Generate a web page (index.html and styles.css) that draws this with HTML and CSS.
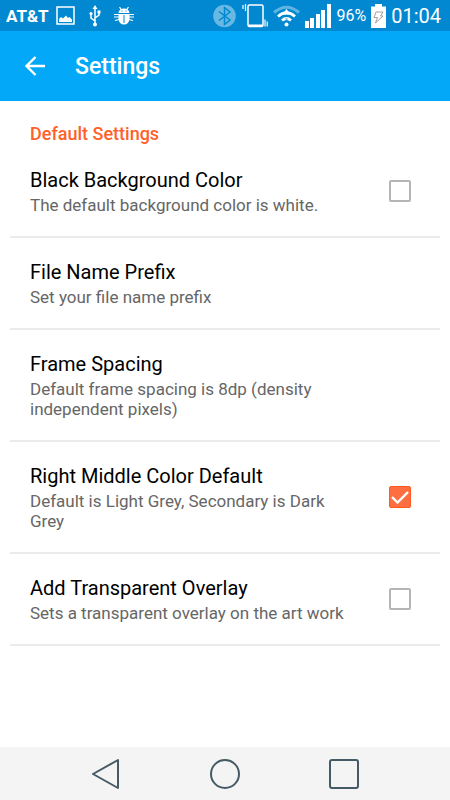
FILE: index.html
```html
<!DOCTYPE html>
<html lang="en">
<head>
<meta charset="utf-8">
<meta name="viewport" content="width=device-width, initial-scale=1">
<title>Settings</title>
<link rel="stylesheet" href="styles.css">
</head>
<body>
<div class="status-bar">
  <div class="status-group notifications">
    <span class="carrier">AT&amp;T</span>
    <svg width="20" height="20" viewBox="0 0 20 20" aria-hidden="true"><rect x="1" y="1" width="17" height="17" fill="none" stroke="#fff" stroke-width="1.500"/><path d="M3 16v-3l2-2 2 1.500 3-3 2 2.500 1.500-1 2.500 2.500V16z" fill="#fff"/></svg>
    <svg width="12" height="22" viewBox="0 0 12 22" aria-hidden="true"><path d="M6 2v17M6 16l-4-3V9M6 13l4-3V7" fill="none" stroke="#fff" stroke-width="1.500"/><path d="M6 0l2.500 4h-5z" fill="#fff"/><circle cx="6" cy="19.500" r="2" fill="#fff"/><circle cx="2" cy="8.500" r="1.600" fill="#fff"/><path d="M8.500 5.500h3v3h-3z" fill="#fff"/></svg>
    <svg width="20" height="18" viewBox="0 0 20 18" aria-hidden="true"><path d="M4.500 6a5.500 4.500 0 0 1 11 0zM4.500 7h11v5a5.500 5.500 0 0 1-11 0z" fill="#fff"/><path d="M5.500 0l2 3M14.500 0l-2 3M0 7.500h5M15 7.500h5M0 10h5M15 10h5M1 13.500l4-1M19 13.500l-4-1" stroke="#fff" stroke-width="1.200"/><path d="M10 8v8M7.500 4h1M11.500 4h1" stroke="#0288d1"/></svg>
  </div>
  <div class="status-group">
    <svg width="24" height="24" viewBox="0 0 24 24" aria-hidden="true"><circle cx="11.500" cy="12" r="11.300" fill="#67b8e3"/><path d="M6 7.500l11 8.500-5.500 4.500v-17L17 8 6 16.500" fill="none" stroke="#0288d1" stroke-width="1.500"/></svg>
    <svg width="26" height="24" viewBox="0 0 26 24" aria-hidden="true"><rect x="6" y="1" width="15" height="21.500" rx="1.500" fill="none" stroke="#fff" stroke-width="1.500"/><path d="M6 20.500h15V23H6z" fill="#fff"/><path d="M3.500 0v7M1 1v4M23 15.500v7M25.200 17.500v5" stroke="#fff" stroke-width="1.200"/></svg>
    <svg width="27" height="22" viewBox="0 0 27 22" aria-hidden="true"><path d="M1 7.500Q13.500-3 26 7.500" fill="none" stroke="#5fb4e2" stroke-width="3"/><path d="M5 11.500Q13.500 4 22 11.500M9 15.500Q13.500 11.500 18 15.500" fill="none" stroke="#fff" stroke-width="2.800"/><path d="M13.500 4l4 5.500h-8z" fill="#fff"/><path d="M11 11.500h5M12.500 14h2" stroke="#0288d1" stroke-width="1.200"/><circle cx="13.500" cy="19.500" r="2" fill="#fff"/></svg>
    <svg width="26" height="24" viewBox="0 0 26 24" aria-hidden="true"><path d="M0 17h4v7H0zM5 14h4v10H5zM11 10h4v14h-4zM16 6h4v18h-4zM22 0h4v24h-4z" fill="#fff"/></svg>
    <span class="percent">96%</span>
    <svg width="15" height="24" viewBox="0 0 15 24" aria-hidden="true"><path d="M4 0h7v2.500h4V24H0V2.500h4z" fill="#fff"/><path d="M5 8h7l-2.500 4H12l-7.500 7 2-5.500H3z" fill="#fff" stroke="#999" stroke-width=".9"/></svg>
    <time class="clock">01:04</time>
  </div>
</div>
<header class="app-bar">
  <button class="back" type="button" aria-label="Back">
    <svg width="22" height="22" viewBox="0 0 22 22" aria-hidden="true"><path d="M21 11H3M11.500 2L2.500 11l9 9" fill="none" stroke="#fff" stroke-width="2.400"/></svg>
  </button>
  <h1 class="title">Settings</h1>
</header>
<main class="content">
  <h2 class="section">Default Settings</h2>
  <ul class="list">
    <li class="row">
      <label class="text" for="black"><span class="name">Black Background Color</span><span class="summary">The default background color is white.</span></label>
      <input class="check" type="checkbox" id="black">
    </li>
    <li class="row">
      <div class="text"><span class="name">File Name Prefix</span><span class="summary">Set your file name prefix</span></div>
    </li>
    <li class="row">
      <div class="text"><span class="name">Frame Spacing</span><span class="summary">Default frame spacing is 8dp (density independent pixels)</span></div>
    </li>
    <li class="row">
      <label class="text" for="middle"><span class="name">Right Middle Color Default</span><span class="summary">Default is Light Grey, Secondary is Dark Grey</span></label>
      <span class="check-wrap"><input class="check" type="checkbox" id="middle" checked><svg class="tick" width="22" height="22" viewBox="0 0 22 22" aria-hidden="true"><path d="M3 11l5.500 5.500L19 6" fill="none" stroke="#fff" stroke-width="2.400"/></svg></span>
    </li>
    <li class="row">
      <label class="text" for="overlay"><span class="name">Add Transparent Overlay</span><span class="summary">Sets a transparent overlay on the art work</span></label>
      <input class="check" type="checkbox" id="overlay">
    </li>
  </ul>
</main>
<nav class="nav-bar" aria-label="System">
  <button type="button" aria-label="Back"><svg width="32" height="32" viewBox="0 0 32 32"><path d="M28 2v28L3 16z"/></svg></button>
  <button type="button" aria-label="Home"><svg width="32" height="32" viewBox="0 0 32 32"><circle cx="16" cy="16" r="14"/></svg></button>
  <button type="button" aria-label="Recent apps"><svg width="32" height="32" viewBox="0 0 32 32"><rect x="2" y="2" width="28" height="28" rx="2"/></svg></button>
</nav>
</body>
</html>
```
FILE: styles.css
```css
* { box-sizing: border-box; }
body {
  margin: 0;
  min-height: 100vh;
  display: flex;
  flex-direction: column;
  background: #fff;
  font-family: Roboto, "Liberation Sans", sans-serif;
  color: #000;
}
svg { display: block; flex: none; }
button { border: 0; padding: 0; background: none; }
.status-bar {
  display: flex;
  justify-content: space-between;
  align-items: center;
  height: 31px;
  padding: 0 9px 0 6px;
  background: #0288d1;
  color: #fff;
}
.status-group { display: flex; align-items: center; gap: 5px; }
.notifications { gap: 13px; }
.carrier { font-size: 17px; font-weight: 700; margin-right: -6px; }
.percent { font-size: 16px; }
.clock { font-size: 20px; line-height: 24px; }
.app-bar {
  display: flex;
  align-items: center;
  height: 70px;
  padding: 0 24px;
  gap: 29px;
  background: #03a9f8;
  color: #fff;
}
.title { margin: 0; padding-top: 2px; font-size: 23px; font-weight: 500; line-height: 26px; }
.content { flex: 1; padding: 21px 10px 0; }
.section {
  margin: 0;
  padding: 0 20px;
  font-size: 18px;
  font-weight: 500;
  line-height: 24px;
  color: #ff5f28;
}
.list { margin: 0; padding: 0; list-style: none; }
.row {
  display: flex;
  align-items: center;
  justify-content: space-between;
  gap: 36px;
  padding: 20px 29px 21px 20px;
  border-bottom: 2px solid #ebebeb;
}
.text { display: block; flex: 0 1 323px; }
.name, .summary { display: block; }
.name { font-size: 20px; line-height: 29px; }
.summary { font-size: 17px; line-height: 20px; color: #666; }
.check {
  appearance: none;
  display: block;
  flex: none;
  width: 22px;
  height: 22px;
  margin: 0;
  border: 2px solid #b5b5b5;
  border-radius: 2px;
}
.check:checked { background: #ff6e40; border: 1px solid #ff5a1f; }
.check-wrap { position: relative; flex: none; }
.tick { position: absolute; inset: 0; pointer-events: none; }
.nav-bar {
  display: flex;
  justify-content: center;
  align-items: center;
  gap: 87px;
  height: 53px;
  background: #f4f4f4;
}
.nav-bar svg { fill: none; stroke: #455a64; stroke-width: 2; stroke-linejoin: round; }
```
